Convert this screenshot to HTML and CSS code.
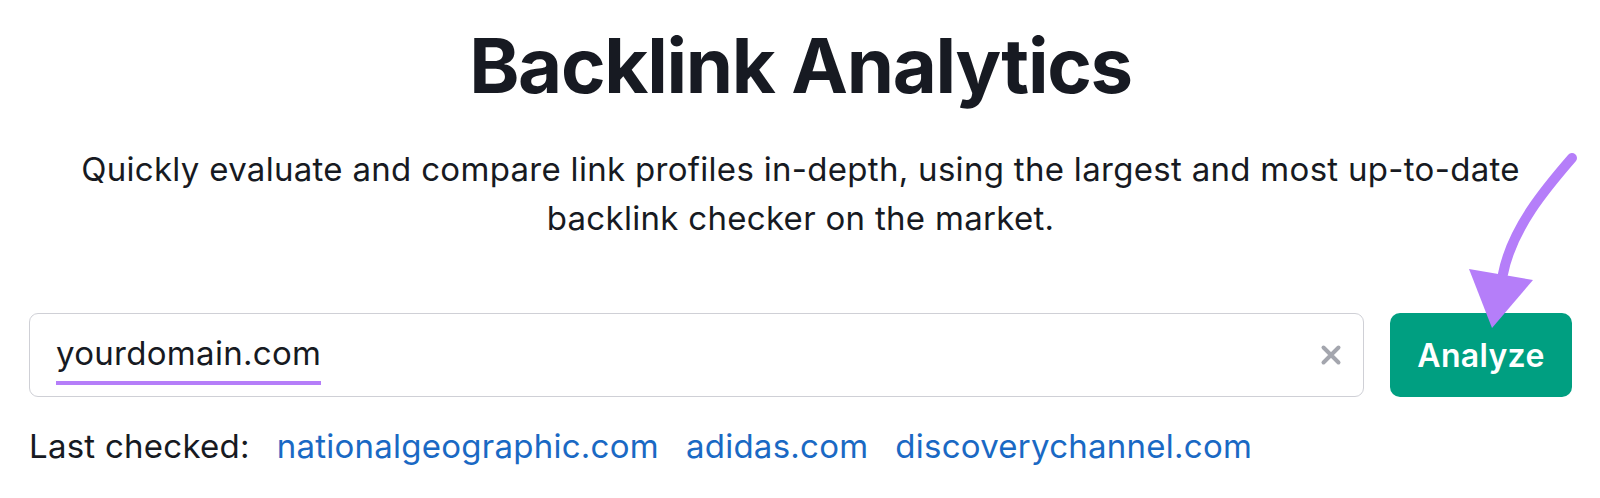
FILE: index.html
```html
<!DOCTYPE html>
<html lang="en">
<head>
    <meta charset="UTF-8">
    <meta name="viewport" content="width=device-width, initial-scale=1.0">
    <title>Backlink Analytics</title>
    <link rel="stylesheet" href="styles.css">
</head>
<body>
    <div class="container">
        <h1 class="title">Backlink Analytics</h1>
        <p class="subtitle">Quickly evaluate and compare link profiles in-depth, using the largest and most up-to-date backlink checker on the market.</p>

        <div class="search-row">
            <div class="search-box">
                <span class="domain">yourdomain.com</span>
                <svg class="clear" width="22" height="22" viewBox="0 0 22 22">
                    <path d="M3.5 3.5 L18.5 18.5 M18.5 3.5 L3.5 18.5" stroke="#a4a6ae" stroke-width="4" stroke-linecap="round"/>
                </svg>
            </div>
            <button class="analyze">Analyze</button>
        </div>

        <div class="last-checked">
            <span>Last checked:</span>
            <a href="#">nationalgeographic.com</a>
            <a href="#">adidas.com</a>
            <a href="#">discoverychannel.com</a>
        </div>

        <!-- purple arrow pointing at the button -->
        <svg class="arrow" width="160" height="200" viewBox="0 0 160 200">
            <path d="M132 18 C 106 48, 72 88, 63 134" fill="none" stroke="#b57ef9" stroke-width="10" stroke-linecap="round"/>
            <polygon points="29,129 93,140 52,188" fill="#b57ef9"/>
        </svg>
    </div>
</body>
</html>
```

FILE: styles.css
```css
body {
    margin: 0;
    background: #fff;
    font-family: Inter, "Noto Sans", sans-serif;
    color: #171a22;
    letter-spacing: 0.3px;
}
.container {
    position: relative;
    padding: 19px 28px 0 29px;
}
.title {
    margin: 0;
    font-size: 76px;
    line-height: 92px;
    font-weight: 700;
    text-align: center;
    letter-spacing: -1.3px;
}
.subtitle {
    margin: 34px auto 0;
    max-width: 1460px;
    font-size: 33px;
    line-height: 49px;
    text-align: center;
}
.search-row {
    display: flex;
    gap: 26px;
    margin-top: 70px;
}
.search-box {
    flex: 1;
    height: 82px;
    border: 1px solid #cfd0d6;
    border-radius: 9px;
    display: flex;
    align-items: center;
    padding: 0 21px 0 26px;
}
.domain {
    font-size: 33px;
    line-height: 40px;
    border-bottom: 4px solid #b57ef9;
    padding-bottom: 8px;
    margin-top: 7px;
}
.clear {
    margin-left: auto;
}
.analyze {
    width: 182px;
    height: 84px;
    border: none;
    border-radius: 10px;
    background: #009f81;
    color: #fff;
    font-family: Inter, "Noto Sans", sans-serif;
    font-size: 32px;
    font-weight: 600;
    letter-spacing: 0.3px;
    cursor: pointer;
}
.last-checked {
    margin-top: 29px;
    font-size: 33px;
    line-height: 40px;
    display: flex;
    gap: 27px;
    letter-spacing: 0.25px;
}
.last-checked a {
    color: #1a69c4;
    text-decoration: none;
}
.arrow {
    position: absolute;
    left: 1440px;
    top: 140px;
}
```
